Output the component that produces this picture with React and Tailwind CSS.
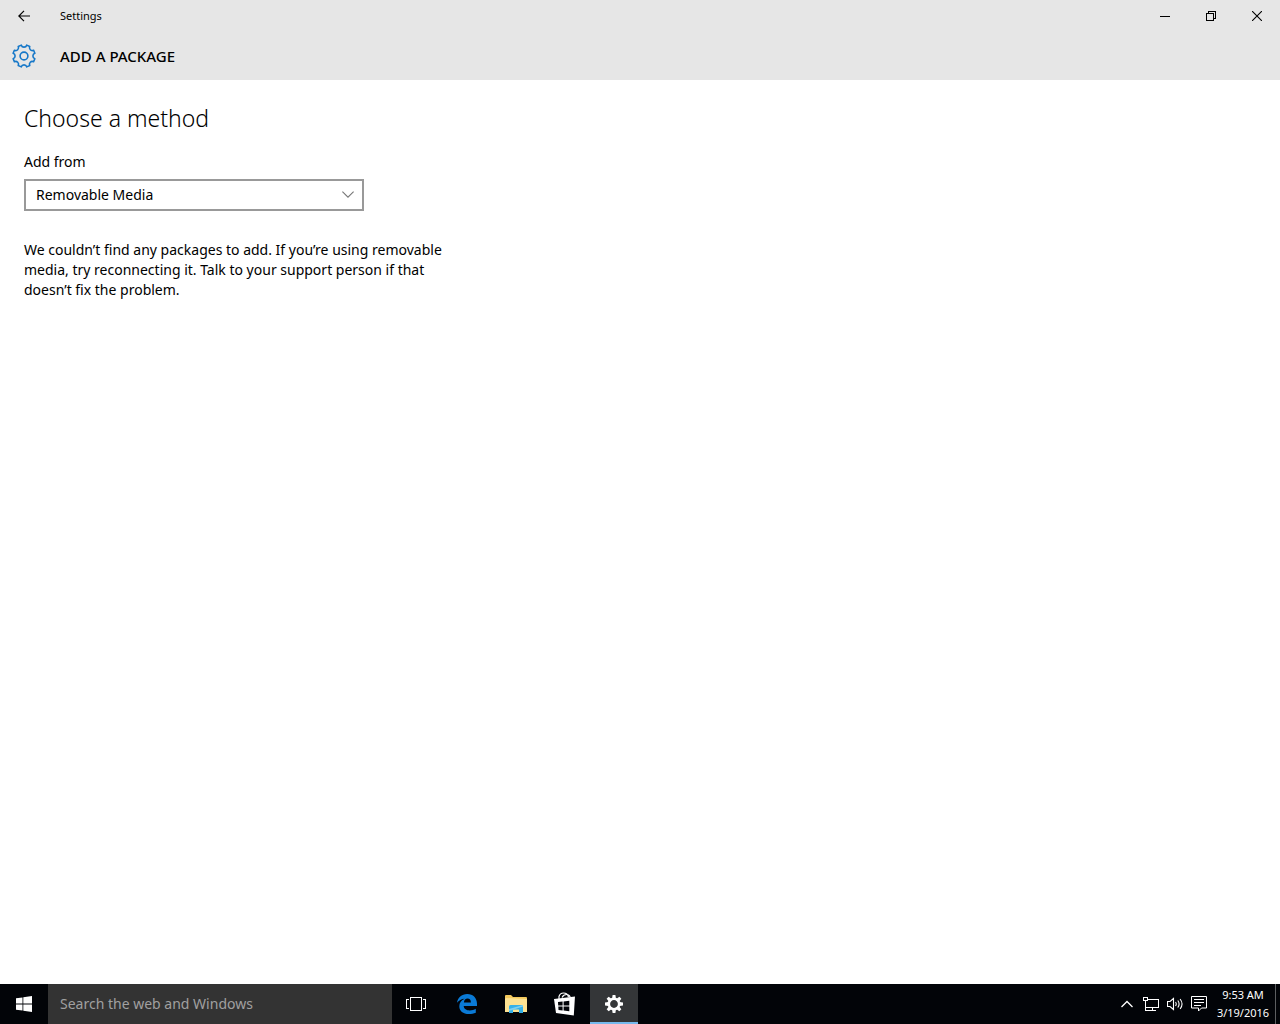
// Outline of an eight-toothed cog, centred on 0,0
function cogPath(outer, spread, valley, start) {
  const point = (deg) => {
    const rad = (deg * Math.PI) / 180;
    return `${(outer * Math.cos(rad)).toFixed(2)} ${(outer * Math.sin(rad)).toFixed(2)}`;
  };
  let d = '';
  for (let i = 0; i < 8; i++) {
    const a = start + i * 45;
    d += `${i === 0 ? 'M' : 'L'}${point(a - spread)}L${point(a + spread)}`;
    d += `A${valley} ${valley} 0 0 0 ${point(a + 45 - spread)}`;
  }
  return d + 'Z';
}

// Straight teeth for the small solid cog
const TEETH = [0, 45, 90, 135, 180, 225, 270, 315];

function CogOutline() {
  return (
    <svg viewBox="-12 -12 24 24" className="size-6" fill="none" stroke="#1577c8" strokeWidth="1.6" strokeLinejoin="round">
      <path d={cogPath(11.2, 8.5, 2.85, 22.5)} />
      <circle r="3.9" />
    </svg>
  );
}

function CogSolid() {
  return (
    <svg viewBox="-9 -9 18 18" className="size-[18px]" fill="#fff">
      {TEETH.map((deg) => (
        <path key={deg} d="M-1.9 -5.5L-1.4 -9H1.4L1.9 -5.5Z" transform={`rotate(${deg})`} />
      ))}
      <circle r="5.2" fill="none" stroke="#fff" strokeWidth="2.6" />
    </svg>
  );
}

function TitleBar() {
  return (
    <div className="flex h-8 items-stretch">
      <button aria-label="Back" className="flex w-12 items-center justify-center">
        <svg viewBox="0 0 12 12" className="size-3" fill="none" stroke="#000" strokeWidth="1.2">
          <path d="M12 6H1M6 .8L.8 6 6 11.2" />
        </svg>
      </button>
      <span className="flex-1 pl-3 text-[11px] leading-8">Settings</span>
      <button aria-label="Minimize" className="flex w-[46px] items-center justify-center">
        <svg viewBox="0 0 10 10" className="size-[10px]" stroke="#000" shapeRendering="crispEdges">
          <path d="M0 5.5H10" />
        </svg>
      </button>
      <button aria-label="Restore" className="flex w-[46px] items-center justify-center">
        <svg viewBox="0 0 10 10" className="size-[10px]" fill="none" stroke="#000" shapeRendering="crispEdges">
          <path d="M.5 2.5h7v7h-7zM2.5 2.5v-2h7v7h-2" />
        </svg>
      </button>
      <button aria-label="Close" className="flex w-[46px] items-center justify-center">
        <svg viewBox="0 0 10 10" className="size-[10px]" fill="none" stroke="#000" strokeWidth="1.1">
          <path d="M0 0L10 10M10 0L0 10" />
        </svg>
      </button>
    </div>
  );
}

function Header() {
  return (
    <header className="bg-[#e6e6e6]">
      <TitleBar />
      <div className="flex h-12 items-center gap-6 pl-3">
        <CogOutline />
        <h1 className="text-[15px] font-medium">ADD A PACKAGE</h1>
      </div>
    </header>
  );
}

function PackageForm() {
  return (
    <main className="flex-1 px-6 pt-6">
      <h2 className="text-[23px] leading-7 font-light">Choose a method</h2>
      <label htmlFor="source" className="mt-5 block text-sm leading-5">
        Add from
      </label>
      <div className="relative mt-[7px] w-[340px] max-w-full">
        <select
          id="source"
          className="block h-8 w-full appearance-none border-2 border-[#999] bg-white px-[10px] text-sm leading-5"
        >
          <option>Removable Media</option>
        </select>
        <svg
          viewBox="0 0 12 7"
          className="pointer-events-none absolute top-3 right-[10px] h-[7px] w-3"
          fill="none"
          stroke="#777"
          strokeWidth="1.1"
        >
          <path d="M.4 .6L6 6.2 11.6 .6" />
        </svg>
      </div>
      <p className="mt-[29px] max-w-[440px] text-sm leading-5">
        We couldn’t find any packages to add. If you’re using removable media, try reconnecting it. Talk to your
        support person if that doesn’t fix the problem.
      </p>
    </main>
  );
}

function EdgeIcon() {
  return (
    <svg viewBox="0 0 20 20" className="size-5" fill="#0a7ad6">
      <path d="M0 8.8C.7 3.6 4.6 0 10.2 0C16.3 0 20 4.2 20 9.8V12H6.7C6.9 15 9.6 16.4 12.7 16.4C15 16.4 17 15.8 18.8 14.7V18.7C16.8 19.6 14.5 20 12 20C6 20 2.3 17 2.3 12.2C2.3 8.7 4.4 6.1 7.6 4.8C4.5 5 1.8 6.4 0 8.8ZM6.9 8.4H13.9C13.9 5.9 12.7 4.5 10.6 4.5C8.5 4.5 7.1 6.1 6.9 8.4Z" />
    </svg>
  );
}

function FolderIcon() {
  return (
    <svg viewBox="0 0 22 18" className="h-[18px] w-[22px]">
      <path d="M0 1Q0 0 1 0H6L8 2H21Q22 2 22 3V17H0Z" fill="#f3c95c" />
      <path d="M1 3L22 4V17H0V4Z" fill="#fde292" />
      <path d="M4 18V11.5Q4 10 5.5 10H16.5Q18 10 18 11.5V18H14V14.5H8V18Z" fill="#35b1e8" />
      <path d="M4 14L18 10V11.5L4 16Z" fill="#7fd0f2" />
    </svg>
  );
}

function StoreIcon() {
  return (
    <svg viewBox="0 0 22 24" className="h-6 w-[22px]">
      <path d="M5 7V4.5Q6 1 9.5 1Q13.5 1 14.5 5M8 5.5Q9.5 2.5 12.5 2.5Q15.8 2.5 16.2 5.5" fill="none" stroke="#fff" strokeWidth="1.2" />
      <path d="M0 7L21 4.5L19.8 23.5L2 21Z" fill="#fff" />
      <path d="M4 10L8.6 9.5V13.5H4.2ZM9.6 9.4L15.3 8.7V13.5H9.6ZM4.3 14.5H8.6V18.5L4.5 18ZM9.6 14.5H15.3V19.3L9.6 18.6Z" fill="#020408" />
    </svg>
  );
}

function Taskbar() {
  return (
    <footer className="flex h-10 items-stretch bg-[#020408] text-white">
      <button aria-label="Start" className="flex w-12 items-center justify-center">
        <svg viewBox="0 0 16 16" className="size-4" fill="#fff">
          <path d="M0 2.3L6.5 1.4V7.6H0ZM7.3 1.3L16 0V7.6H7.3ZM0 8.4H6.5V14.6L0 13.7ZM7.3 8.4H16V16L7.3 14.7Z" />
        </svg>
      </button>
      <input
        type="text"
        aria-label="Search the web and Windows"
        placeholder="Search the web and Windows"
        className="w-[344px] min-w-0 bg-[#333] px-3 text-sm placeholder:text-[#a0a0a0]"
      />
      <button aria-label="Task View" className="flex w-12 items-center justify-center">
        <svg viewBox="0 0 20 14" className="h-[14px] w-5" fill="none" stroke="#fff" shapeRendering="crispEdges">
          <path d="M4.5 .5h11v13h-11zM3 2.5H.5v9H3M17 2.5h2.5v9H17" />
        </svg>
      </button>
      <div className="ml-[3px] flex gap-px">
        <button aria-label="Microsoft Edge" className="flex w-12 items-center justify-center">
          <EdgeIcon />
        </button>
        <button aria-label="File Explorer" className="flex w-12 items-center justify-center">
          <FolderIcon />
        </button>
        <button aria-label="Store" className="flex w-12 items-center justify-center">
          <StoreIcon />
        </button>
        <button
          aria-label="Settings"
          className="flex w-12 items-center justify-center border-b-2 border-[#76b9ed] bg-[#343638] pt-[2px]"
        >
          <CogSolid />
        </button>
      </div>
      <div className="ml-auto flex items-stretch">
        <button aria-label="Show hidden icons" className="flex w-6 items-center justify-center">
          <svg viewBox="0 0 12 8" className="h-2 w-3" fill="none" stroke="#fff" strokeWidth="1.3">
            <path d="M.5 7L6 1.5 11.5 7" />
          </svg>
        </button>
        <button aria-label="Network" className="flex w-6 items-center justify-center">
          <svg viewBox="0 0 16 14" className="h-[14px] w-4" fill="none" stroke="#fff" shapeRendering="crispEdges">
            <path d="M.5 .5h4v3h-4zM2.5 4v9.5H13M5 2.5H15.5V10.5H2.5M9.5 11v2.5" />
          </svg>
        </button>
        <button aria-label="Volume" className="flex w-6 items-center justify-center">
          <svg viewBox="0 0 17 14" className="h-[14px] w-[17px]" fill="none" stroke="#fff" strokeWidth="1.1">
            <path d="M.5 4.5H3L6.5 1.5V12.5L3 9.5H.5ZM8.5 5Q10 7 8.5 9M10.8 3.5Q13.4 7 10.8 10.5M13.1 2Q17 7 13.1 12" />
          </svg>
        </button>
        <button aria-label="Notifications" className="flex w-6 items-center justify-center">
          <svg viewBox="0 0 16 16" className="size-4" fill="none" stroke="#fff">
            <path d="M.5 .5h15v11.5h-5L7.5 15V12H.5ZM3 3.5h10M3 6.5h10M3 9.5h7" />
          </svg>
        </button>
        <button className="w-16 text-center text-[11px] leading-[18px]">
          9:53 AM
          <br />
          3/19/2016
        </button>
        <button aria-label="Show desktop" className="w-[5px] border-l border-[#5c5e60]" />
      </div>
    </footer>
  );
}

export default function App() {
  return (
    <div className="flex min-h-screen flex-col bg-white font-['Noto_Sans','Open_Sans',sans-serif] text-black">
      <Header />
      <PackageForm />
      <Taskbar />
    </div>
  );
}
